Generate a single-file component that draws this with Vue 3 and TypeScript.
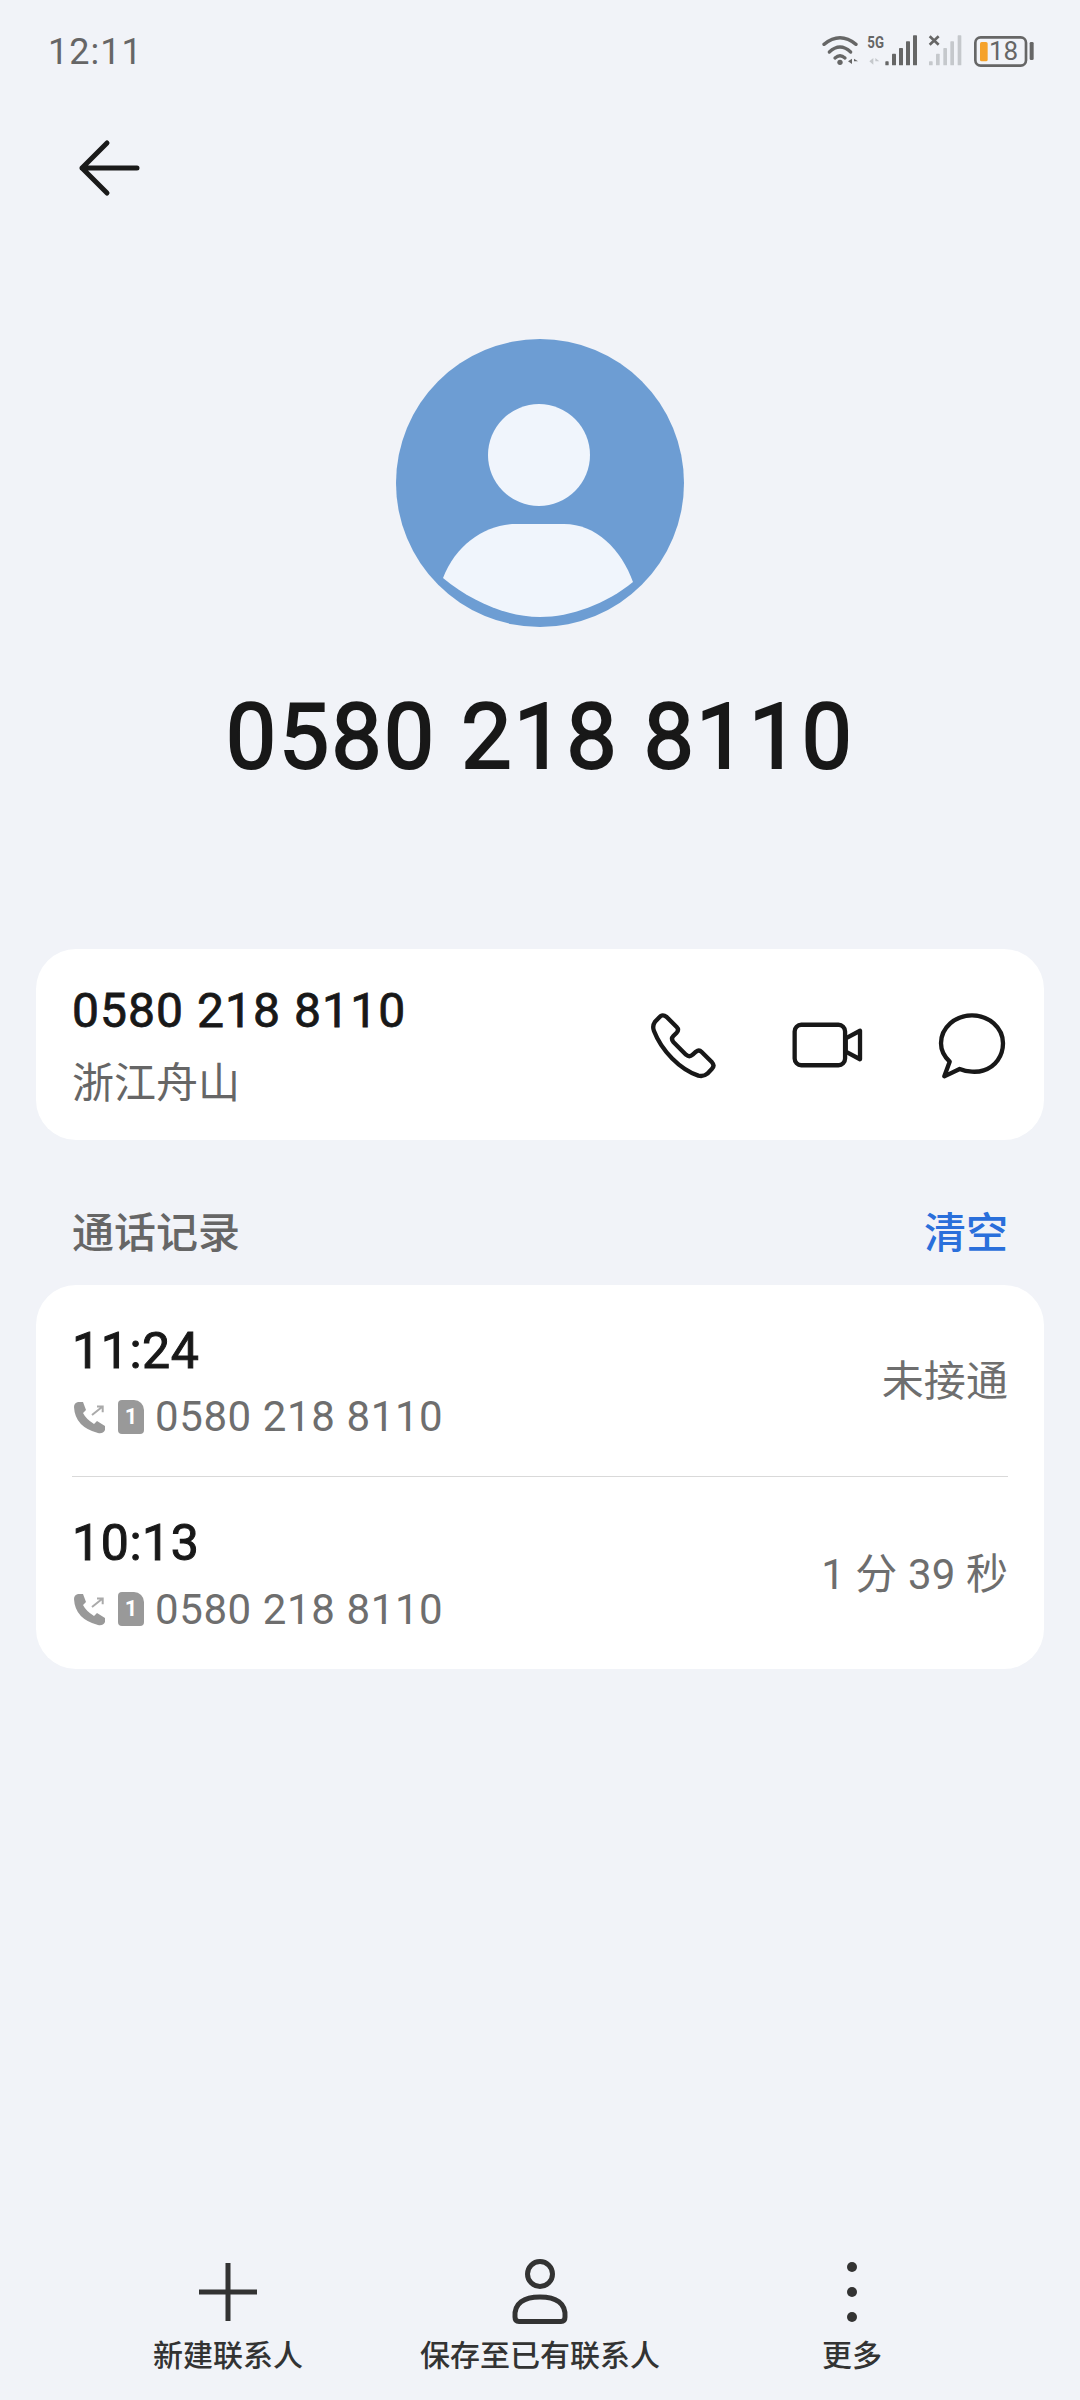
<template>
  <div class="page">
    <div class="status-bar">
      <span class="time">12:11</span>
      <svg class="status-icons" viewBox="120 70 660 120" width="220" height="40">
        <g fill="none" stroke="#666" stroke-width="10" stroke-linecap="round">
          <path d="M132 107 Q180 68 228 107" />
          <path d="M148 130 Q180 100 212 130" />
          <path d="M165 148 Q180 135 195 148" />
        </g>
        <circle cx="180" cy="161" r="8" fill="#666" />
        <path d="M204 158 L216 150 V166 Z M222 150 L234 158 H222 Z" fill="#666" />
        <text x="262" y="118" class="net-text" textLength="50" lengthAdjust="spacingAndGlyphs">5G</text>
        <path d="M268 158 L280 148 V168 Z M286 148 L298 158 H286 Z" fill="#c5c8cc" />
        <g fill="#666">
          <rect x="316" y="158" width="10" height="12" rx="2" />
          <rect x="336" y="135" width="12" height="35" rx="2" />
          <rect x="357" y="118" width="12" height="52" rx="2" />
          <rect x="378" y="98" width="12" height="72" rx="2" />
          <rect x="399" y="80" width="12" height="90" rx="2" />
        </g>
        <path d="M449 83 L476 108 M476 83 L449 108" stroke="#666" stroke-width="8" fill="none" />
        <g fill="#c5c8cc">
          <rect x="447" y="158" width="11" height="12" rx="2" />
          <rect x="468" y="135" width="11" height="35" rx="2" />
          <rect x="490" y="118" width="11" height="52" rx="2" />
          <rect x="511" y="98" width="11" height="72" rx="2" />
          <rect x="533" y="80" width="11" height="90" rx="2" />
        </g>
        <rect x="586" y="86" width="152" height="85" rx="16" fill="none" stroke="#666" stroke-width="8" />
        <rect x="600" y="100" width="23" height="58" rx="5" fill="#f5a22b" />
        <text x="627" y="155" class="battery-text">18</text>
        <rect x="749" y="100" width="12" height="54" rx="4" fill="#666" />
      </svg>
    </div>

    <div class="back-row">
      <svg viewBox="0 0 72 72" width="72" height="72">
        <path d="M35 11 L10 36 L35 61 M10 36 H65" fill="none" stroke="#1a1a1a" stroke-width="5" stroke-linecap="round" stroke-linejoin="round" />
      </svg>
    </div>

    <div class="avatar-wrap">
      <svg viewBox="0 0 288 288" width="288" height="288">
        <circle cx="144" cy="144" r="144" fill="#6d9dd3" />
        <circle cx="143" cy="116" r="51" fill="#f0f5fc" />
        <path d="M47 239 C60 205 90 185 120 185 H168 C200 185 225 210 237 243 C210 265 175 278 144 278 C110 278 75 262 47 239 Z" fill="#f0f5fc" />
      </svg>
    </div>

    <h1 class="title">{{ phone }}</h1>

    <div class="card contact-card">
      <div class="contact-info">
        <div class="contact-number">{{ phone }}</div>
        <div class="contact-place">浙江舟山</div>
      </div>
      <div class="actions">
        <svg viewBox="90 120 204 204" width="68" height="68">
          <path d="M122 135 Q130 130 140 138 L170 168 Q178 176 170 185 L160 195 Q152 203 160 213 L198 251 Q208 260 218 251 L228 242 Q237 235 245 243 L276 274 Q285 284 276 293 L262 308 Q250 318 235 314 C180 295 125 240 102 180 Q96 165 105 152 Z" class="action-line" />
        </svg>
        <svg viewBox="515 150 220 150" width="73" height="50">
          <rect x="526" y="164" width="152" height="122" rx="20" class="action-line" />
          <path d="M680 205 L723 182 V268 L680 245 Z" class="action-line" />
        </svg>
        <svg viewBox="950 120 210 204" width="70" height="68">
          <path d="M1018 294 C1040 303 1070 305 1090 298 C1125 288 1148 255 1148 217 C1148 170 1105 133 1055 133 C1005 133 962 170 962 217 C962 237 972 257 988 272 L972 316 Z" class="action-line" />
        </svg>
      </div>
    </div>

    <div class="section-head">
      <span class="section-title">通话记录</span>
      <span class="section-clear">清空</span>
    </div>

    <div class="card records">
      <div v-for="item in records" :key="item.time" class="record">
        <div class="record-main">
          <div class="record-time">{{ item.time }}</div>
          <div class="record-line">
            <svg viewBox="0 0 36 36" width="36" height="36">
              <path d="M6 3 L11 3 L14 11 L11 14 Q14 20 22 25 L25 22 L33 27 L33 31 Q31 35 26 34 Q3 28 2 8 Q2 4 6 3Z" fill="#999" />
              <path d="M20 16 L30 8 M25 7.6 H30.7 V13.3" fill="none" stroke="#aaa" stroke-width="2" />
            </svg>
            <span class="sim">1</span>
            <span class="record-number">{{ phone }}</span>
          </div>
        </div>
        <div class="record-state">{{ item.state }}</div>
      </div>
    </div>

    <div class="toolbar">
      <div class="tool">
        <svg viewBox="0 0 72 72" width="72" height="72">
          <path d="M36 7 V65 M7 36 H65" stroke="#333" stroke-width="5" fill="none" />
        </svg>
        <span>新建联系人</span>
      </div>
      <div class="tool">
        <svg viewBox="0 0 72 72" width="72" height="72">
          <circle cx="36" cy="18" r="12.5" fill="none" stroke="#333" stroke-width="5" />
          <path d="M11 61 C10 47 20 41 36 41 C52 41 62 47 61 61 Q61 65.500 57 65.500 H15 Q11 65.500 11 61 Z" fill="none" stroke="#333" stroke-width="5" />
        </svg>
        <span>保存至已有联系人</span>
      </div>
      <div class="tool">
        <svg viewBox="0 0 72 72" width="72" height="72">
          <circle cx="36" cy="11" r="5" fill="#333" />
          <circle cx="36" cy="36" r="5" fill="#333" />
          <circle cx="36" cy="61" r="5" fill="#333" />
        </svg>
        <span>更多</span>
      </div>
    </div>
  </div>
</template>

<script setup lang="ts">
interface CallRecord {
  time: string
  state: string
}

const phone = '0580 218 8110'

const records: CallRecord[] = [
  { time: '11:24', state: '未接通' },
  { time: '10:13', state: '1 分 39 秒' }
]
</script>

<style scoped>
.page {
  width: 1080px;
  height: 2400px;
  display: flex;
  flex-direction: column;
  background: #f1f3f8;
  font-family: Roboto, "Noto Sans CJK SC", sans-serif;
  color: #181818;
  overflow: hidden;
}

.status-bar {
  height: 104px;
  display: flex;
  align-items: center;
  justify-content: space-between;
  padding: 0 40px 0 48px;
}

.time {
  font-size: 36px;
  color: #666;
  letter-spacing: 1px;
}

.net-text {
  font-size: 48px;
  font-weight: 700;
  fill: #666;
  font-family: Roboto, sans-serif;
}

.battery-text {
  font-size: 78px;
  fill: #666;
  font-family: Roboto, sans-serif;
}

.back-row {
  margin-top: 28px;
  height: 72px;
  padding-left: 72px;
}

.avatar-wrap {
  margin-top: 135px;
  height: 288px;
  display: flex;
  justify-content: center;
}

.title {
  margin: 61px 0 0;
  height: 100px;
  line-height: 100px;
  font-size: 90px;
  font-weight: 400;
  text-align: center;
  letter-spacing: 2.1px;
  -webkit-text-stroke: 2px #181818;
}

.card {
  margin: 0 36px;
  background: #fff;
  border-radius: 40px;
}

.contact-card {
  margin-top: 161px;
  height: 191px;
  padding: 0 37px 0 36px;
  display: flex;
  align-items: center;
  justify-content: space-between;
}

.contact-info {
  padding-top: 4px;
}

.contact-number {
  font-size: 48px;
  font-weight: 400;
  line-height: 56px;
  letter-spacing: 1.05px;
  -webkit-text-stroke: 0.8px #181818;
}

.contact-place {
  margin-top: 19px;
  font-size: 42px;
  line-height: 52px;
  color: #666;
}

.actions {
  display: flex;
  align-items: center;
  gap: 73px;
}

.action-line {
  fill: none;
  stroke: #181818;
  stroke-width: 13;
  stroke-linejoin: round;
}

.section-head {
  height: 145px;
  padding: 0 36px 25px;
  margin: 0 36px;
  box-sizing: border-box;
  display: flex;
  align-items: flex-end;
  justify-content: space-between;
  font-size: 42px;
  line-height: 52px;
  font-weight: 500;
}

.section-title {
  color: #666;
}

.section-clear {
  color: #2a6fdb;
}

.records {
  padding: 0 36px;
}

.record {
  height: 191px;
  display: flex;
  align-items: center;
  justify-content: space-between;
}

.record + .record {
  height: 192px;
  border-top: 1px solid #d9d9d9;
}

.record-main {
  padding-top: 4px;
}

.record-time {
  font-size: 50px;
  font-weight: 400;
  line-height: 60px;
  letter-spacing: 0.6px;
  -webkit-text-stroke: 1px #181818;
}

.record-line {
  margin-top: 8px;
  height: 56px;
  display: flex;
  align-items: center;
}

.sim {
  margin-left: 10px;
  width: 26px;
  height: 34px;
  border-radius: 4px 10px 4px 4px;
  background: #999;
  color: #fff;
  font-size: 22px;
  font-weight: 700;
  line-height: 34px;
  text-align: center;
}

.record-number {
  margin-left: 11px;
  font-size: 42px;
  font-weight: 400;
  letter-spacing: 0.6px;
  color: #6e6e6e;
}

.record-state {
  margin-top: -6px;
  font-size: 42px;
  font-weight: 400;
  letter-spacing: 0.1px;
  color: #6e6e6e;
}

.toolbar {
  margin-top: auto;
  padding: 0 72px 24px;
  display: grid;
  grid-template-columns: repeat(3, 1fr);
}

.tool {
  display: flex;
  flex-direction: column;
  align-items: center;
  gap: 8px;
  font-size: 30px;
  line-height: 40px;
  font-weight: 500;
  color: #333;
}
</style>
